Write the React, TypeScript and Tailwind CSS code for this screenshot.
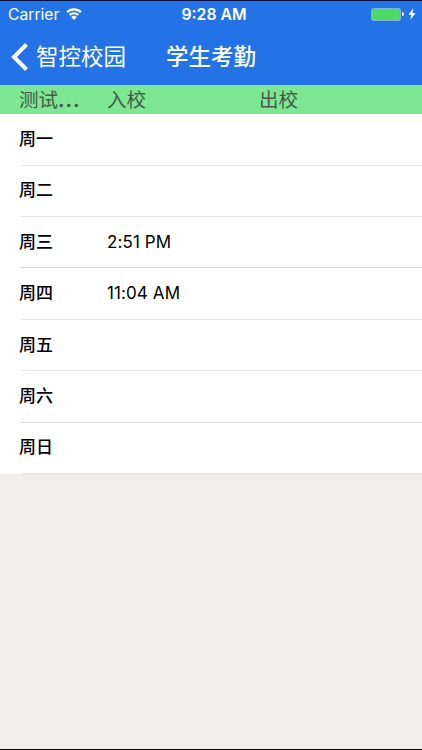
const days = [
  { name: '周一', entry: '', exit: '', line: 'bg-[#e5e5e7]' },
  { name: '周二', entry: '', exit: '', line: 'bg-[#e5e5e7]' },
  { name: '周三', entry: '2:51 PM', exit: '', line: 'bg-[#dcdcde]' },
  { name: '周四', entry: '11:04 AM', exit: '', line: 'bg-[#e5e5e7]' },
  { name: '周五', entry: '', exit: '', line: 'bg-[#e5e5e7]' },
  { name: '周六', entry: '', exit: '', line: 'bg-[#dcdcde]' },
  { name: '周日', entry: '', exit: '', line: 'bg-[#e5e5e7]' },
];

function StatusBar() {
  return (
    <div className="grid h-7 grid-cols-3 items-center pr-[6px] pl-2 text-white">
      <div className="flex items-center gap-[7px]">
        <span className="w-[51px] text-[15.7px] leading-7 whitespace-nowrap">Carrier</span>
        <svg className="mb-[2px]" width="16" height="12" viewBox="0 0 17 13" fill="none" stroke="white" strokeWidth="2.3">
          <path d="M1 4.6a10.6 10.6 0 0 1 15 0" />
          <path d="M3.7 7.7a6.8 6.8 0 0 1 9.6 0" />
          <path d="M8.5 13 5.5 10a4.2 4.2 0 0 1 6 0Z" fill="white" stroke="none" />
        </svg>
      </div>
      <span className="pl-1 text-center text-[15.8px] leading-7 font-semibold whitespace-nowrap">9:28 AM</span>
      <div className="flex items-center justify-end pb-[2px]">
        <div className="h-[13px] w-[30px] rounded-[2.5px] border border-[#83b5dc] bg-[#4cd964]" />
        <div className="ml-px h-1 w-[2px] rounded-r-full bg-white" />
        <svg className="ml-[4px]" width="8" height="12" viewBox="0 0 7 12" fill="white">
          <path d="M4.8 0 0 6.8h2.9L1.9 12 7 4.9H4.1Z" />
        </svg>
      </div>
    </div>
  );
}

export default function App() {
  return (
    <div className="flex h-[750px] w-[422px] flex-col overflow-hidden border-t border-b border-t-[#07103f] border-b-black bg-[#f1eeea] font-[Inter,'Noto_Sans_CJK_SC',sans-serif]">
      <header className="h-[84px] shrink-0 bg-[#2473e6] text-white">
        <StatusBar />
        <div className="flex h-14 items-center pl-[11px] text-[22.5px] leading-[54px]">
          <svg width="18" height="28" viewBox="0 0 18 28" fill="none" stroke="white" strokeWidth="4">
            <path d="M15.5 1.5 3 14 15.5 26.5" />
          </svg>
          <span className="ml-[7px] w-[130px]">智控校园</span>
          <h1 className="font-medium">学生考勤</h1>
        </div>
      </header>
      <div className="flex h-[29.4px] shrink-0 bg-[#7ee793] pl-[19px] text-[19.5px] leading-[31px] text-[#47594b]">
        <span className="w-[88px] whitespace-nowrap">测试<span className="font-bold tracking-[1px]">...</span></span>
        <span className="w-[152px]">入校</span>
        <span>出校</span>
      </div>
      <main className="shrink-0 bg-white text-black">
        {days.map((day) => (
          <div key={day.name} className="flex h-[51.37px] flex-col">
            <div className="flex flex-1 items-center pl-[19px] text-[17px] leading-[49px]">
              <span className="w-[88px] font-medium">{day.name}</span>
              <span className="w-[152px] tracking-[0.1px]">{day.entry}</span>
              <span>{day.exit}</span>
            </div>
            <div className={`ml-[21px] h-px shrink-0 ${day.line}`} />
          </div>
        ))}
      </main>
    </div>
  );
}
